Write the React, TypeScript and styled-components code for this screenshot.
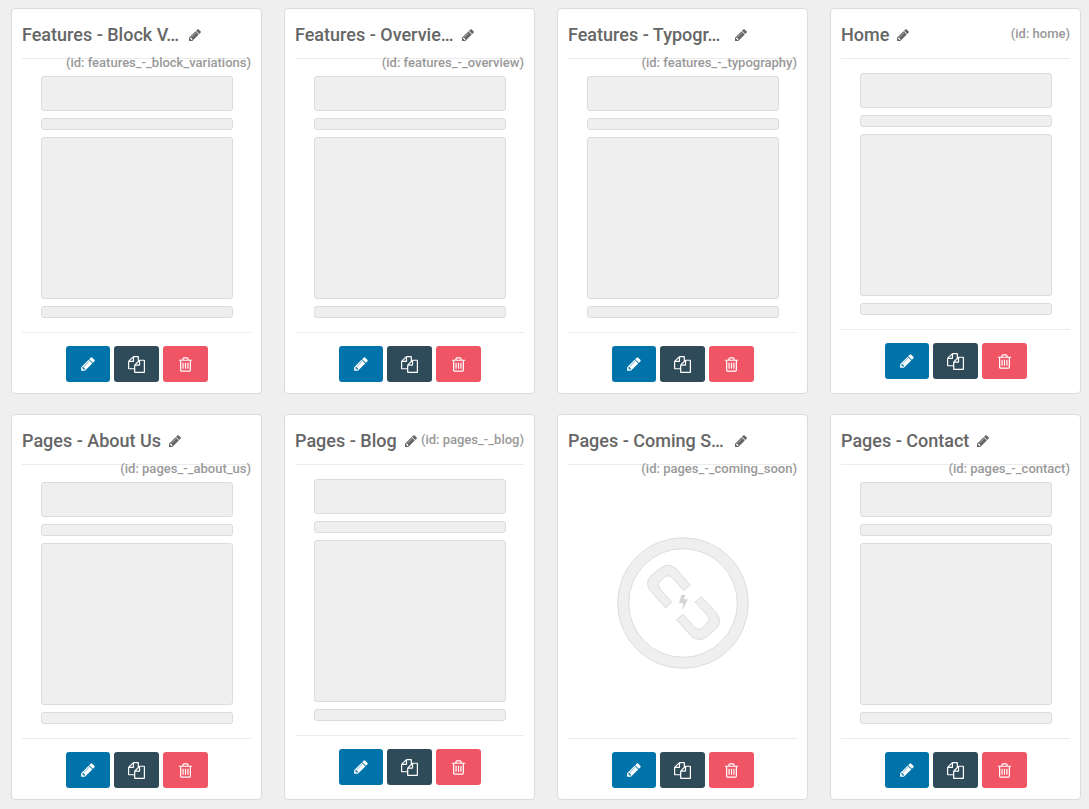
import React from "react";
import styled, { createGlobalStyle, css } from "styled-components";

const GlobalStyle = createGlobalStyle`
  * { box-sizing: border-box; }
  body {
    margin: 0;
    background: #efefef;
    color: #666;
    font-family: Roboto, "Liberation Sans", sans-serif;
  }
`;

const Board = styled.main`
  display: grid;
  grid-template-columns: repeat(4, minmax(0, 1fr));
  gap: 20px 22px;
  padding: 8px 8px 9px 11px;
`;

const Card = styled.article`
  padding: 0 10px 11px;
  background: #fff;
  border: 1px solid #dcdcdc;
  border-radius: 4px;
`;

const CardHeader = styled.header`
  height: 50px;
  margin-bottom: 10px;
  padding-top: 15px;
  border-bottom: 1px solid #ebebeb;
`;

const TitleGroup = styled.div`
  float: left;
  display: flex;
  align-items: center;
  gap: 7px;
  height: 29px;
  padding-bottom: 8px;
`;

const Title = styled.h2<{ $clipped: boolean }>`
  margin: 0;
  min-width: ${({ $clipped }) => ($clipped ? "159px" : "0")};
  white-space: nowrap;
  font-size: 18px;
  line-height: 24px;
  font-weight: 500;
`;

const RenameButton = styled.button`
  display: flex;
  padding: 0;
  border: 0;
  background: none;
  color: #666;
  cursor: pointer;
`;

const PageId = styled.span`
  float: right;
  color: #999;
  font-size: 13px;
  line-height: 19px;
  font-weight: 500;
`;

const Preview = styled.div`
  clear: both;
  display: flex;
  flex-direction: column;
  gap: 7px;
  height: 261px;
  padding: 4px 18px 14px 19px;
  border-bottom: 1px solid #ebebeb;
`;

const Block = styled.div<{ $size: "bar" | "banner" | "main" }>`
  background: #efefef;
  border: 1px solid #dcdcdc;
  border-radius: 3px;
  ${({ $size }) =>
    $size === "main"
      ? css`flex: 1;`
      : css`height: ${$size === "banner" ? 35 : 12}px;`}
`;

const EmptyPreview = styled.div`
  flex: 1;
  display: flex;
  align-items: center;
  justify-content: center;
`;

const Actions = styled.footer`
  display: flex;
  justify-content: center;
  gap: 4px;
  padding-top: 13px;
`;

const tones = { edit: "#0073aa", copy: "#2f4b59", remove: "#ef5565" };

const ActionButton = styled.button<{ $tone: keyof typeof tones }>`
  display: flex;
  align-items: center;
  justify-content: center;
  height: 36px;
  padding: 0 14px;
  border: 0;
  border-radius: 3px;
  background: ${({ $tone }) => tones[$tone]};
  color: #fff;
  cursor: pointer;
`;

const icons = {
  pencil:
    "M491 1536l91-91-235-235-91 91v107h128v128h107zm523-928q0-22-22-22-10 0-17 7l-542 542q-7 7-7 17 0 22 22 22 10 0 17-7l542-542q7-7 7-17zm-54-192l416 416-832 832h-416v-416zm683 96q0 53-37 90l-166 166-416-416 166-165q36-38 90-38 53 0 91 38l235 234q37 39 37 91z",
  files:
    "M1696 384q40 0 68 28t28 68v1216q0 40-28 68t-68 28h-960q-40 0-68-28t-28-68v-288h-544q-40 0-68-28t-28-68v-672q0-40 20-88t48-76l408-408q28-28 76-48t88-20h416q40 0 68 28t28 68v328q68-40 128-40h416zm-544 213l-299 299h299v-299zm-640-384l-299 299h299v-299zm196 647l316-316v-416h-384v416q0 40-28 68t-68 28h-416v640h512v-256q0-40 20-88t48-76zm956 804v-1152h-384v416q0 40-28 68t-68 28h-416v640h896z",
  trash:
    "M704 736v576q0 14-9 23t-23 9h-64q-14 0-23-9t-9-23v-576q0-14 9-23t23-9h64q14 0 23 9t9 23zm256 0v576q0 14-9 23t-23 9h-64q-14 0-23-9t-9-23v-576q0-14 9-23t23-9h64q14 0 23 9t9 23zm256 0v576q0 14-9 23t-23 9h-64q-14 0-23-9t-9-23v-576q0-14 9-23t23-9h64q14 0 23 9t9 23zm128 724v-948h-896v948q0 22 7 40.5t14.5 27 10.5 8.5h832q3 0 10.5-8.5t14.5-27 7-40.5zm-672-1076h448l-48-117q-7-9-17-11h-317q-10 2-17 11zm928 32v64q0 14-9 23t-23 9h-96v948q0 83-47 143.5t-113 60.5h-832q-66 0-113-58.5t-47-141.5v-952h-96q-14 0-23-9t-9-23v-64q0-14 9-23t23-9h309l70-167q15-37 54-63t79-26h320q40 0 79 26t54 63l70 167h309q14 0 23 9t9 23z",
};

function Icon({ name, size }: { name: keyof typeof icons; size: number }) {
  return (
    <svg width={size} height={size} viewBox="0 0 1792 1792" fill="currentColor" aria-hidden="true">
      <path d={icons[name]} />
    </svg>
  );
}

function BrokenLink() {
  return (
    <svg width="132" height="132" viewBox="48 51 396 396" role="img" aria-label="No preview">
      <g fill="#efefef" stroke="#dcdcdc" strokeWidth="3">
        <circle cx="246" cy="249" r="196" />
        <circle cx="246" cy="249" r="163" fill="#fff" />
        <path d="M268 195L249 212L215 174Q203 162 190 172L180 181Q166 193 178 208L212 246L194 264L147 211Q134 193 144 175Q147 170 152 166L177 145Q201 127 223 144Z" />
        <path d="M282 246L301 230L347 280Q363 301 349 322L320 349Q296 367 272 350L227 299L246 283L281 322Q292 333 303 324L318 310Q330 299 319 286Z" />
      </g>
      <path d="M241 225H253L249 238H261L244 271L246 250H234Z" fill="#d5d5d5" />
    </svg>
  );
}

interface Page {
  title: string;
  id: string;
  empty?: boolean;
}

const pages: Page[] = [
  { title: "Features - Block V…", id: "features_-_block_variations" },
  { title: "Features - Overvie…", id: "features_-_overview" },
  { title: "Features - Typogr…", id: "features_-_typography" },
  { title: "Home", id: "home" },
  { title: "Pages - About Us", id: "pages_-_about_us" },
  { title: "Pages - Blog", id: "pages_-_blog" },
  { title: "Pages - Coming S…", id: "pages_-_coming_soon", empty: true },
  { title: "Pages - Contact", id: "pages_-_contact" },
];

function PageCard({ title, id, empty }: Page) {
  return (
    <Card>
      <CardHeader>
        <TitleGroup>
          <Title $clipped={title.endsWith("…")}>{title}</Title>
          <RenameButton type="button" aria-label={`Rename ${id}`}>
            <Icon name="pencil" size={14} />
          </RenameButton>
        </TitleGroup>
        <PageId>(id: {id})</PageId>
      </CardHeader>
      <Preview>
        {empty ? (
          <EmptyPreview>
            <BrokenLink />
          </EmptyPreview>
        ) : (
          <>
            <Block $size="banner" />
            <Block $size="bar" />
            <Block $size="main" />
            <Block $size="bar" />
          </>
        )}
      </Preview>
      <Actions>
        <ActionButton type="button" $tone="edit" aria-label={`Edit ${id}`}>
          <Icon name="pencil" size={16} />
        </ActionButton>
        <ActionButton type="button" $tone="copy" aria-label={`Duplicate ${id}`}>
          <Icon name="files" size={17} />
        </ActionButton>
        <ActionButton type="button" $tone="remove" aria-label={`Delete ${id}`}>
          <Icon name="trash" size={17} />
        </ActionButton>
      </Actions>
    </Card>
  );
}

export default function App() {
  return (
    <>
      <GlobalStyle />
      <Board>
        {pages.map((page) => (
          <PageCard key={page.id} {...page} />
        ))}
      </Board>
    </>
  );
}
